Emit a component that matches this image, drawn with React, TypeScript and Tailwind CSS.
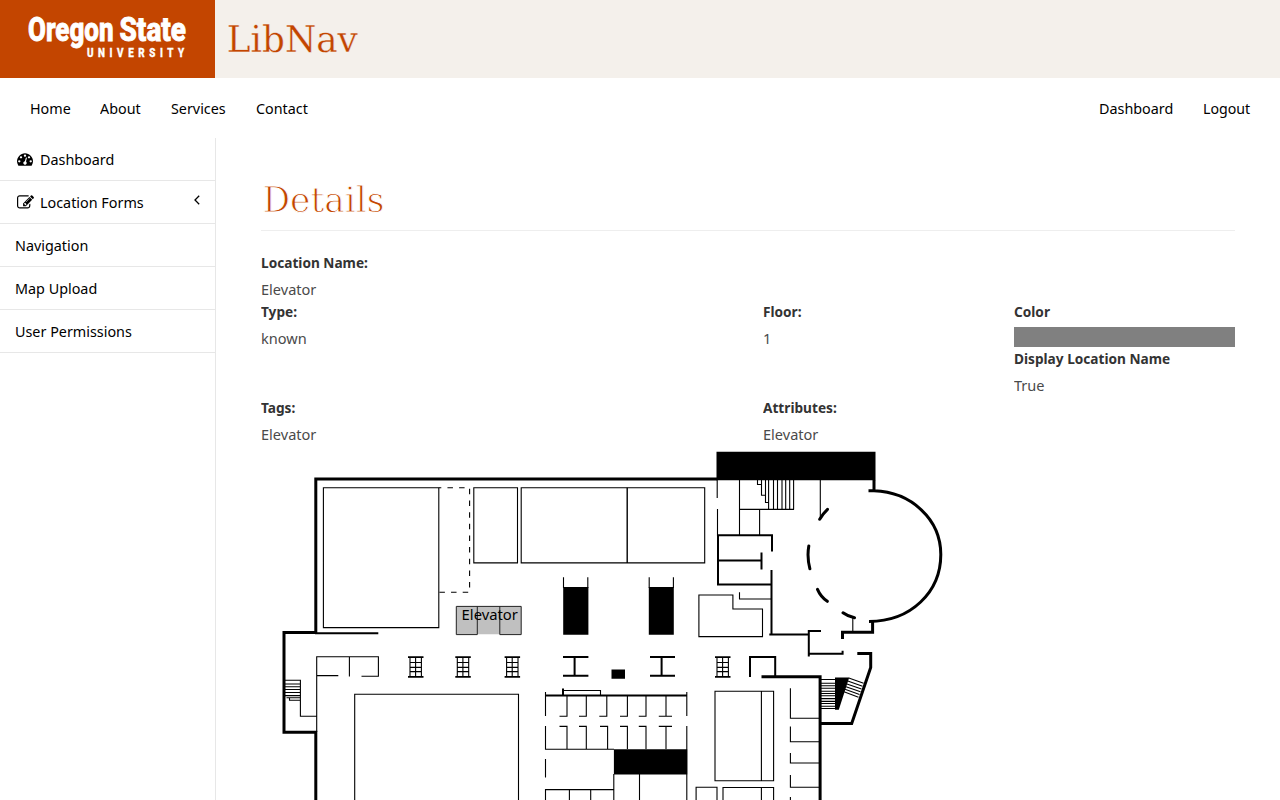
import React from "react";

const topLinks = [
  { label: "Home", box: "w-[70px]" },
  { label: "About", box: "w-[71px]" },
  { label: "Services", box: "w-[85px]" },
  { label: "Contact", box: "w-[83px]" },
];

const gaugePath =
  "M384 1152q0-53-37.5-90.5t-90.5-37.5-90.5 37.5-37.5 90.5 37.5 90.5 90.5 37.5 90.5-37.5 37.5-90.5zm192-448q0-53-37.5-90.5t-90.5-37.5-90.5 37.5-37.5 90.5 37.5 90.5 90.5 37.5 90.5-37.5 37.5-90.5zm428 481l101-382q6-26-7.5-48.5t-38.5-29.5-48 6.5-30 39.5l-101 382q-60 5-107 43.5t-63 98.5q-20 77 20 146t117 89 146-20 89-117q16-60-6-117t-72-91zm660-33q0-53-37.5-90.5t-90.5-37.5-90.5 37.5-37.5 90.5 37.5 90.5 90.5 37.5 90.5-37.5 37.5-90.5zm-640-640q0-53-37.5-90.5t-90.5-37.5-90.5 37.5-37.5 90.5 37.5 90.5 90.5 37.5 90.5-37.5 37.5-90.5zm448 192q0-53-37.5-90.5t-90.5-37.5-90.5 37.5-37.5 90.5 37.5 90.5 90.5 37.5 90.5-37.5 37.5-90.5zm320 448q0 261-141 483-19 29-54 29h-1402q-35 0-54-29-141-221-141-483 0-182 71-348t191-286 286-191 348-71 348 71 286 191 191 286 71 348z";

const editPath =
  "M888 1184l116-116-152-152-116 116v56h96v96h56zm440-720q-16-16-33 1l-350 350q-17 17-1 33t33-1l350-350q17-17 1-33zm80 594v190q0 119-84.5 203.5t-203.5 84.5h-832q-119 0-203.5-84.5t-84.5-203.5v-832q0-119 84.5-203.5t203.5-84.5h832q63 0 117 25 15 7 18 23 3 17-9 29l-49 49q-14 14-32 8-23-6-45-6h-832q-66 0-113 47t-47 113v832q0 66 47 113t113 47h832q66 0 113-47t47-113v-126q0-13 9-22l64-64q15-15 35-7t20 29zm-96-738l288 288-672 672h-288v-288zm444 132l-92 92-288-288 92-92q28-28 68-28t68 28l152 152q28 28 28 68t-28 68z";

function Ladder({ x }: { x: number }) {
  return (
    <g transform={`translate(${x} 0)`}>
      <path strokeWidth="1.8" d="M0 657.2H15.5M0 676.8H15.5" />
      <path strokeWidth="1.1" d="M2 657V677M7.6 657V677M13.4 657V677M2 662.5H13.4M2 667.4H13.4M2 671.6H13.4" />
    </g>
  );
}

function FloorMap() {
  return (
    <svg viewBox="261 445 974 355" width="974" height="355" className="block shrink-0" fill="none" stroke="#000">
      <g strokeWidth="3">
        <path d="M717 479H315.8V632.6H284V732.3H315.8V802" />
        <path d="M874 480V491M868.5 490.8H874C911 492 940.8 519 940.8 554.5C940.8 592 911 621.4 869 621.4" />
        <path d="M872.6 621V632.2H842.5V639" />
        <path d="M857.3 653.5H870.7V667.5L851.7 723.4H819" />
        <path d="M761.5 676.7H820.1V802" />
        <path strokeLinecap="round" d="M819.7 519.3Q823 513.5 827.5 509.3M808.8 546Q806.8 557 809.9 568.8M817.5 589.3Q820.5 596.5 827.3 601.3M843 612.8Q848 616.5 854.5 617.7" />
      </g>
      <g fill="#000" stroke="none">
        <path d="M716.5 451.8H875.5V480.3H716.5ZM563.2 587H588.4V634.7H563.2ZM648.8 587H673.8V634.7H648.8ZM611.5 669.5H625V678.8H611.5ZM613.9 749.2H687.2V774.5H613.9ZM835 677.6H849.2L838.8 709.8H835Z" />
      </g>
      <g strokeWidth="2">
        <path d="M315 633.2H378.3" />
        <path d="M772 551.5V535.3H718V584.5H771.5M718 560.5H761.5M761.5 552.5V569.5M771.5 570V634.6" />
        <path d="M769.3 634.6H808.8M821 631H808.8V656.5M808.8 653.7H842.6V650.7" />
        <path d="M750 677V657H775.2V676" />
        <path d="M563 657H588.4M563 675.8H588.4M574.6 657V676M650 657H675M650 675.8H675M661.6 657V676" />
        <path d="M545.3 695.5H687M563 688.5V696" />
      </g>
      <g strokeWidth="1.1">
        <path d="M323.4 487.7H438.8V627.6H323.4ZM473.8 487.7H517.5V562.9H473.8ZM521.2 487.7H704.7V562.9H521.2Z" />
        <path strokeWidth="1.4" d="M627.2 487.7V563" />
        <path strokeDasharray="5.5 6.15" strokeDashoffset="3" d="M438.8 487.7H469.6V592.3H438.8" />
        <path d="M563.5 577.3V588M587.8 577.3V588M649.2 577.3V588M673.4 577.3V588" />
        <path d="M717.2 480V498M717.5 509V536M739.5 480V535M739.5 509.4H794M759.6 509V535M768.6 480V509.5M773.5 480V509.5M777.5 480V509.5M782 480V509.5M785.7 480V509.5M789.7 480V509.5M793.6 480V509.5M757.5 480V484.5H761.5V495.2H765.5V502.5H768.5M761.5 480V485M765.5 480V496M820.3 480V519" />
        <path d="M739.5 592.3V599H771M698.9 595H732.9V609H762.5V636.6H698.9ZM852.8 618V632" />
        <path d="M316.7 732V656.7H378.4V676.3H361.5M316.7 675.6H338.3M349.4 656.7V676.5" />
        <path d="M285 680.3H300.4V716.3H317M285 684H300M285 686.8H300M285 689.5H300M285 692.5H300M285 695.6H300M286.5 697.8H300M289.5 698V700.3H300" />
        <path d="M354.7 801V694.3H518.5V801" />
        <path d="M563 690.5H600.5V695M545.5 692V716M686.8 692V716M545.5 726V749.3H614M686.8 726V801" />
        <path d="M567 696V716.3H559.5M586.3 696V716.3H579M606.8 696V716.3H599.3M627.4 696V716.3H620M646 696V716.3H638.8M666 696V716.3M658.8 716.3H672" />
        <path d="M567 749V726.4H559.5M586.3 749V726.4H579M607.6 749V726.4H600M627.4 749V726.4H620M646 749V726.4H638.8M666 749V726.4M658.8 726.4H672" />
        <path d="M613.8 774V801M639.5 774V801M545.5 759V777.5M545.5 801V789.6H614M569.4 789.6V801M590.7 789.6V801" />
        <path d="M715 691.2H773.6V780.7H715ZM761.4 691.2V780.7M696.1 801V787.3H717V801M723 801V787.5H773.6V801M761.4 787.5V801" />
        <path d="M790.4 688.3V718.2H820M790.4 726.5V741.7H820M790.4 753V763H820M790.4 775V787.3H820M790.4 797V801" />
        <path d="M821 679.5H835.5M821 683.2H835.5M821 685.8H835.5M821 688.3H835.5M821 691.3H835.5M821 693.5H835.5M821 695.8H835.5M821 698.6H835.5M821 701.4H835.5M821 703.5H835.5M821 706.2H835.5M821 708.5H835.5" />
        <path d="M848.8 678L863.6 683.2M847.8 681L862.5 686.2M846.9 684L861.5 689M846 686.8L860.5 691.8M845 689.3L859.5 694.4M844 691.8L858.5 697.2" />
      </g>
      <Ladder x={408} />
      <Ladder x={455.3} />
      <Ladder x={504.6} />
      <Ladder x={715} />
      <path fill="#c0c0c0" stroke="none" d="M456.3 606.4H521.2V634.2H456.3Z" />
      <path strokeWidth="1" stroke="#222" d="M477.3 606.4V634.6H456.3V606.4H521.2V634.6H499.8V606.4" />
      <text x="461.6" y="620.3" fontSize="15" textLength="56.3" lengthAdjust="spacingAndGlyphs" fill="#000" stroke="none">
        Elevator
      </text>
    </svg>
  );
}

function Label({ children }: { children: string }) {
  return (
    <div className="mb-[5px] h-[22px] origin-left scale-x-[0.91] whitespace-nowrap font-bold leading-[23px] text-[#333]">
      {children}
    </div>
  );
}

function Field({ label, value }: { label: string; value: string }) {
  return (
    <div>
      <Label>{label}</Label>
      <div className="h-[22px] origin-left scale-x-[0.97] whitespace-nowrap leading-[23px] text-[#4a4a4a]">{value}</div>
    </div>
  );
}

function SideText({ children }: { children: string }) {
  return <span className="origin-left scale-x-[0.957] whitespace-nowrap">{children}</span>;
}

export default function App() {
  return (
    <div className="flex h-screen flex-col overflow-hidden bg-white font-['Noto_Sans',sans-serif] text-[15px] text-black">
      <header className="flex h-[78px] shrink-0 bg-[#f4f0eb]">
        <div className="h-[78px] w-[215px] bg-[#c34500]">
          <svg width="215" height="78" viewBox="0 0 215 78" fill="#fff" stroke="#fff" className="font-['Roboto',sans-serif] font-extrabold">
            <text x="28" y="40.8" fontSize="33" textLength="85.5" lengthAdjust="spacingAndGlyphs" strokeWidth="0.9">Oregon</text>
            <text x="119.5" y="40.8" fontSize="33" textLength="66.5" lengthAdjust="spacingAndGlyphs" strokeWidth="0.9">State</text>
            <g transform="translate(87 57) scale(0.76 1)">
              <text fontSize="13" textLength="128" strokeWidth="0.4">UNIVERSITY</text>
            </g>
          </svg>
        </div>
        <svg width="160" height="78" viewBox="0 0 160 78" className="font-['DejaVu_Serif',serif]">
          <text x="11.8" y="51.7" fontSize="36.5" textLength="131" lengthAdjust="spacingAndGlyphs" fill="#c34500" stroke="#f4f0eb" strokeWidth="0.3">LibNav</text>
        </svg>
      </header>

      <nav className="flex h-[60px] shrink-0 items-center justify-between leading-[60px]">
        <div className="flex pl-[30px]">
          {topLinks.map((l) => (
            <a key={l.label} className={l.box}>
              <span className="inline-block origin-left scale-x-[0.955]">{l.label}</span>
            </a>
          ))}
        </div>
        <div className="flex pr-[30px]">
          <a className="w-[104.5px]">
            <span className="inline-block origin-left scale-x-[0.957]">Dashboard</span>
          </a>
          <a className="w-[47px]">
            <span className="inline-block origin-left scale-x-[0.945]">Logout</span>
          </a>
        </div>
      </nav>

      <div className="flex min-h-0 flex-1">
        <aside className="w-[216px] shrink-0 border-r border-[#e7e7e7] [&>a]:flex [&>a]:h-[43px] [&>a]:items-center [&>a]:border-b [&>a]:border-[#e7e7e7] [&>a]:px-[15px]">
          <a>
            <svg viewBox="0 0 1792 1792" className="ml-[2px] mr-[7px] h-4 w-4 shrink-0"><path d={gaugePath} /></svg>
            <SideText>Dashboard</SideText>
          </a>
          <a>
            <svg viewBox="0 0 1792 1792" className="ml-[2px] mr-[6px] h-[17px] w-[17px] shrink-0"><path d={editPath} /></svg>
            <SideText>Location Forms</SideText>
            <svg viewBox="0 0 6 10" className="mb-1 ml-auto h-[10px] w-[6px] shrink-0" fill="none" stroke="#000" strokeWidth="1.3">
              <path d="M5.2 0.8L1 5L5.2 9.2" />
            </svg>
          </a>
          <a><SideText>Navigation</SideText></a>
          <a><SideText>Map Upload</SideText></a>
          <a><SideText>User Permissions</SideText></a>
        </aside>

        <main className="min-w-0 flex-1 pl-[45px] pr-[45px]">
          <h1 className="mb-5 h-[93px] border-b border-[#eee]">
            <svg width="160" height="92" viewBox="0 0 160 92" className="font-['DejaVu_Serif',serif]">
              <text x="1.5" y="74.2" fontSize="36" textLength="122" lengthAdjust="spacingAndGlyphs" fill="#c34500" stroke="#fff" strokeWidth="1">Details</text>
            </svg>
          </h1>
          <Field label="Location Name:" value="Elevator" />
          <div className="grid h-[96px] grid-cols-[502px_251px_221px]">
            <Field label="Type:" value="known" />
            <Field label="Floor:" value="1" />
            <div>
              <Label>Color</Label>
              <div className="h-5 bg-[#808080]" />
              <Field label="Display Location Name" value="True" />
            </div>
          </div>
          <div className="grid h-[49px] grid-cols-[502px_472px]">
            <Field label="Tags:" value="Elevator" />
            <Field label="Attributes:" value="Elevator" />
          </div>
          <FloorMap />
        </main>
      </div>
    </div>
  );
}
